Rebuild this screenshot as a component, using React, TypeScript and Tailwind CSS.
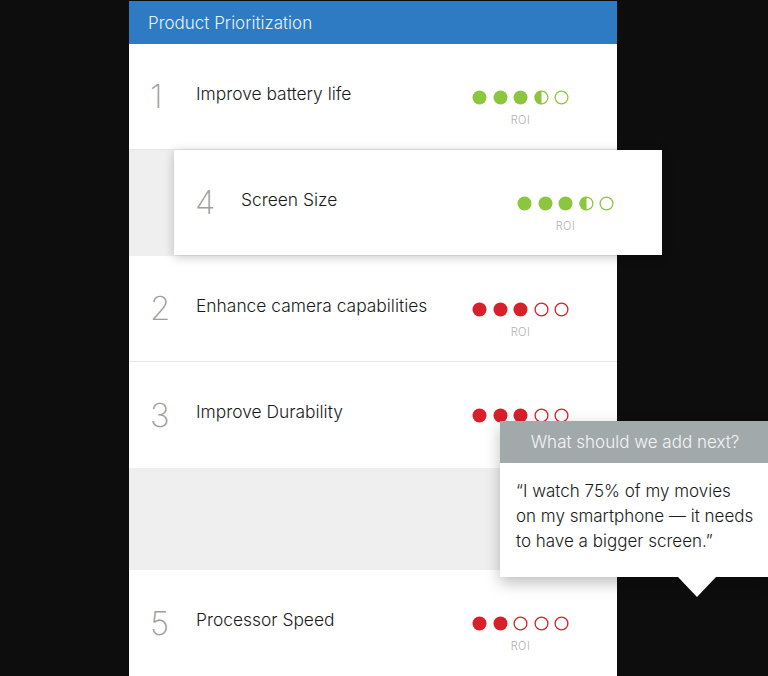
import React from 'react';

type Tone = 'green' | 'red';

interface Item {
  rank: number;
  title: string;
  score: number;
  tone: Tone;
}

const items: Item[] = [
  { rank: 1, title: 'Improve battery life', score: 3.5, tone: 'green' },
  { rank: 2, title: 'Enhance camera capabilities', score: 3, tone: 'red' },
  { rank: 3, title: 'Improve Durability', score: 3, tone: 'red' },
  { rank: 5, title: 'Processor Speed', score: 2, tone: 'red' },
];

const dragged: Item = { rank: 4, title: 'Screen Size', score: 3.5, tone: 'green' };

function Dot({ fill, color }: { fill: 'full' | 'half' | 'empty'; color: string }) {
  return (
    <svg width="15" height="15" viewBox="0 0 15 15">
      {fill === 'full' && <circle cx="7.5" cy="7.5" r="7" fill={color} />}
      {fill === 'half' && <path d="M7.5 0.5 A7 7 0 0 0 7.5 14.5 Z" fill={color} />}
      {fill !== 'full' && <circle cx="7.5" cy="7.5" r="6.4" fill="none" stroke={color} strokeWidth="1.3" />}
    </svg>
  );
}

function Roi({ score, tone }: { score: number; tone: Tone }) {
  const color = tone === 'green' ? '#8cc63e' : '#d7202a';
  return (
    <div className="flex flex-col items-center pt-[23px]">
      <div className="flex gap-[5.5px]">
        {[0, 1, 2, 3, 4].map((i) => (
          <Dot key={i} color={color} fill={score >= i + 1 ? 'full' : score > i ? 'half' : 'empty'} />
        ))}
      </div>
      <span className="mt-[9px] text-[11px] font-light leading-[13px] tracking-[0.5px] text-[#b0b0b0]">ROI</span>
    </div>
  );
}

function RowContent({ item }: { item: Item }) {
  return (
    <>
      <span className="w-[46px] text-[33px] font-extralight leading-none text-[#9e9e9e]">{item.rank}</span>
      <span className="flex-1 -mt-[5px] text-[17.4px] font-light text-[#1a1a1a]">{item.title}</span>
      <Roi score={item.score} tone={item.tone} />
    </>
  );
}

function Row({ item, last }: { item: Item; last?: boolean }) {
  return (
    <div className={`flex h-[106px] items-center bg-white pl-[21px] pr-[48px] ${last ? '' : 'border-b border-[#e6e6e6]'}`}>
      <RowContent item={item} />
    </div>
  );
}

export default function App() {
  return (
    <div className="relative h-[676px] w-[768px] overflow-hidden bg-[#0d0d0d] font-['Inter',sans-serif]">
      <div className="ml-[129px] mt-[1px] w-[488px]">
        <div className="flex h-[43px] items-center bg-[#2e7bc3] pl-[19px] pt-[2px] text-[17px] font-light text-[#e8f1fa]">
          Product Prioritization
        </div>
        <Row item={items[0]} />
        <div className="relative h-[106px] bg-[#efefef]">
          <div className="absolute left-[45px] top-0 flex h-[105px] w-[488px] items-center bg-white pl-[21px] pr-[48px] shadow-[0_2px_10px_rgba(0,0,0,0.22)]">
            <RowContent item={dragged} />
          </div>
        </div>
        <Row item={items[1]} />
        <Row item={items[2]} last />
        <div className="h-[102px] bg-[#efefef]" />
        <Row item={items[3]} last />
      </div>

      <div className="absolute left-[500px] top-[421px] w-[270px] shadow-[0_6px_14px_rgba(0,0,0,0.25)]">
        <div className="flex h-[42px] items-center justify-center bg-[#a2a9ab] pt-[2px] text-[17px] font-light text-[#f3f5f5]">
          What should we add next?
        </div>
        <div className="bg-white px-[16px] pb-[23px] pt-[16px] text-[17px] font-light leading-[25px] text-[#1a1a1a]">
          “I watch 75% of my movies
          <br />
          on my smartphone — it needs
          <br />
          to have a bigger screen.”
        </div>
        <div className="absolute left-[178px] top-full h-0 w-0 border-x-[19px] border-t-[20px] border-x-transparent border-t-white" />
      </div>
    </div>
  );
}
